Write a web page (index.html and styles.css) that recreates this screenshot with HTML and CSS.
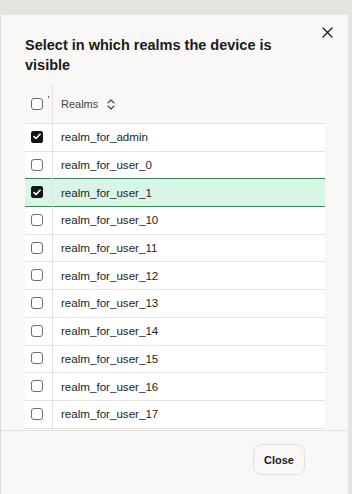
FILE: index.html
```html
<!DOCTYPE html>
<html lang="en">
<head>
    <meta charset="UTF-8">
    <meta name="viewport" content="width=device-width, initial-scale=1.0">
    <title>Realms</title>
    <link rel="stylesheet" href="styles.css">
</head>
<body>
    <div class="modal">
        <div class="modal-header">
            <h2 class="modal-title">Select in which realms the device is visible</h2>
            <button class="close-x" aria-label="Close">
                <svg width="11" height="11" viewBox="0 0 11 11"><path d="M1 1L10 10M10 1L1 10" stroke="#222" stroke-width="1.4" stroke-linecap="round"/></svg>
            </button>
        </div>
        <div class="table-wrap">
            <table class="realms">
                <thead>
                    <tr>
                        <th class="col-check"><span class="box"></span><span class="grip"></span></th>
                        <th class="col-name">Realms
                            <svg class="sort" width="8" height="11" viewBox="0 0 8 11"><path d="M1 4L4 1L7 4M1 7L4 10L7 7" fill="none" stroke="#444" stroke-width="1.1" stroke-linecap="round" stroke-linejoin="round"/></svg>
                        </th>
                    </tr>
                </thead>
                <tbody id="rows"></tbody>
            </table>
        </div>
        <div class="modal-footer">
            <button class="btn">Close</button>
        </div>
    </div>
    <script>
        let rows = document.getElementById('rows');
        let realms = ['realm_for_admin'];
        [0, 1, 10, 11, 12, 13, 14, 15, 16, 17].forEach(function (n) {
            realms.push('realm_for_user_' + n);
        });
        let checked = ['realm_for_admin', 'realm_for_user_1'];
        let check = '<svg width="8" height="7" viewBox="0 0 8 7"><path d="M1 3.6L3 5.5L7 1.2" fill="none" stroke="#fff" stroke-width="1.6" stroke-linecap="round" stroke-linejoin="round"/></svg>';

        realms.forEach(function (name) {
            let on = checked.includes(name);
            let tr = document.createElement('tr');
            if (name === 'realm_for_user_1') tr.className = 'selected';
            tr.innerHTML = '<td class="col-check"><span class="box' + (on ? ' on' : '') + '">' + (on ? check : '') + '</span></td>' +
                '<td class="col-name">' + name + '</td>';
            rows.appendChild(tr);
        });
        // next row peeking out under the fold
        let more = document.createElement('tr');
        more.innerHTML = '<td class="col-check"></td><td class="col-name"></td>';
        rows.appendChild(more);
    </script>
</body>
</html>
```

FILE: styles.css
```css
body {
    margin: 0;
    padding-top: 15px;
    background: #e6e4e1;
    font-family: "Liberation Sans", Arial, sans-serif;
    color: #1d1d1d;
}
.modal {
    width: 348px;
    height: 479px;
    background-color: #f9f8f6;
    border-left: 1px solid #dedcd9;
    display: flex;
    flex-direction: column;
    box-sizing: border-box;
}
.modal-header {
    display: flex;
    align-items: flex-start;
    padding: 20px 11px 0 24px;
    gap: 12px;
}
.modal-title {
    flex: 1;
    margin: 0;
    font-size: 14.5px;
    line-height: 20px;
    font-weight: bold;
    color: #1a1a1a;
}
.close-x {
    background: none;
    border: none;
    padding: 0;
    margin-top: -13px;
    width: 20px;
    height: 20px;
    display: flex;
    align-items: center;
    justify-content: center;
    cursor: pointer;
}
.table-wrap {
    margin: 9px 23px 0 24px;
    height: 346px;
    overflow: hidden;
}
.realms {
    width: 100%;
    border-collapse: collapse;
    font-size: 11.6px;
}
.realms th {
    height: 38px;
    padding: 0;
    text-align: left;
    font-weight: normal;
    font-size: 11px;
    color: #444;
    background-color: #f9f8f7;
    border-bottom: 1px solid #e4e2df;
}
.realms td {
    height: 27.7px;
    padding: 0 0 1px;
    background-color: #fff;
    border-top: 1px solid #e6e4e1;
    color: #1e1e1e;
    box-sizing: border-box;
}
.realms .col-check {
    width: 27px;
    border-right: 1px solid #e4e2df;
    position: relative;
}
.realms .col-name {
    padding-left: 8px;
}
.realms th.col-name {
    padding-top: 1px;
}
.sort {
    margin-left: 6px;
    vertical-align: -2px;
}
.grip {
    position: absolute;
    right: 3px;
    top: 12px;
    width: 1px;
    height: 2px;
    background-color: #666;
}
.box {
    display: flex;
    align-items: center;
    justify-content: center;
    width: 12px;
    height: 12px;
    margin-left: 6px;
    box-sizing: border-box;
    border: 1px solid #6e6e6e;
    border-radius: 3px;
    background-color: #fff;
}
.box.on {
    background-color: #161616;
    border-color: #161616;
    border-radius: 2px;
}
.realms tr.selected td {
    background-color: #d9f5e6;
    border-top-color: #3c8558;
}
.realms tr.selected + tr td {
    border-top-color: #3c8558;
}
.modal-footer {
    flex: 1;
    border-top: 1px solid #e2e0dd;
    display: flex;
    justify-content: flex-end;
    align-items: flex-start;
    padding: 13px 43px 0 0;
}
.btn {
    width: 52px;
    height: 31px;
    font-family: "Liberation Sans", Arial, sans-serif;
    font-size: 11px;
    font-weight: bold;
    color: #1a1a1a;
    background-color: #f9f8f6;
    border: 1px solid #e3e1de;
    border-radius: 8px;
    cursor: pointer;
}
```
